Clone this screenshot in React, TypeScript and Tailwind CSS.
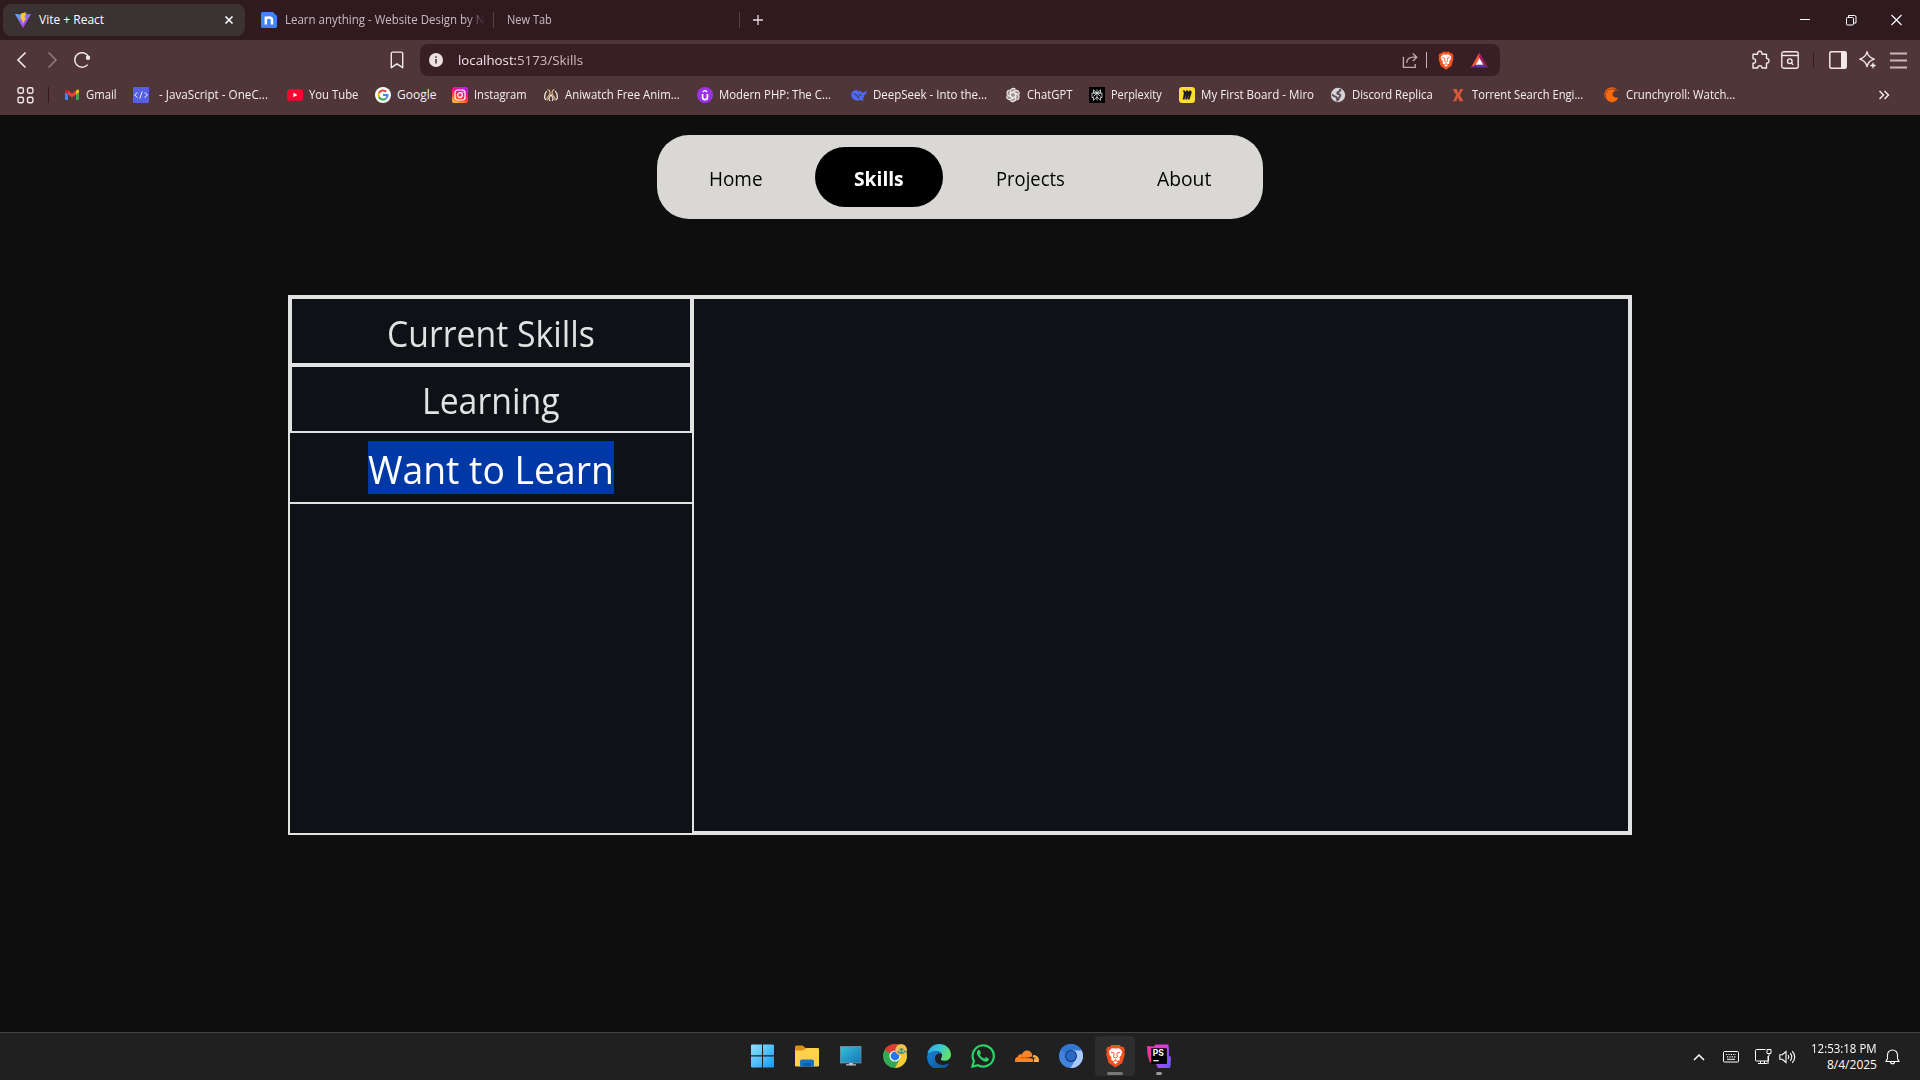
import { useLayoutEffect, useRef, useState } from "react";
import type { ReactNode } from "react";

const FONT = "font-['Segoe_UI','Open_Sans','Noto_Sans',sans-serif]";

/* A line of text condensed or widened to an exact advance width. */
function Fit({ children, w, className = "" }: { children: string; w: number; className?: string }) {
  const ref = useRef<HTMLSpanElement>(null);
  const [scale, setScale] = useState(1);
  useLayoutEffect(() => {
    const measure = () => {
      if (ref.current) setScale(w / ref.current.offsetWidth);
    };
    measure();
    document.fonts?.ready.then(measure);
  }, [w]);
  return (
    <span className={`inline-block shrink-0 whitespace-pre ${className}`} style={{ width: w }}>
      <span ref={ref} className="inline-block origin-left" style={{ transform: `scaleX(${scale})` }}>
        {children}
      </span>
    </span>
  );
}

function BraveLogo({ className }: { className: string }) {
  return (
    <svg viewBox="0 0 20 24" className={className}>
      <path d="M14 1l2 2 2-.2L19.4 6l-.6 2 .6 2-2.6 9-6.8 4.6L3.2 19 .6 10l.6-2-.6-2L2 2.8 4 3l2-2z" fill="#f4501f" />
      <path d="M10 4.600l2.600-.4 1.600.4 2.400 3-.8 3.600-1.900 2 .5 1.600-.6 1.700-2.200.4-1.600-1.600-1.600 1.600-2.200-.4-.6-1.700.5-1.600-1.900-2L3.400 7.600l2.400-3 1.600-.4zM7.600 18.200L10 16.800l2.400 1.400L10 20z" fill="#fff" />
      <path d="M5.200 8.200l3 .7.400 1.400-.6 2.600L10 14.200l2-1.300-.6-2.600.4-1.400 3-.7" fill="none" stroke="#f4501f" strokeWidth="1" />
    </svg>
  );
}

const ic = "size-4 shrink-0";

const bookmarks: { label: string; slot: number; w: number; icon: ReactNode; pad?: boolean }[] = [
  {
    label: "Gmail", slot: 69, w: 31,
    icon: (
      <svg viewBox="0 0 16 16" className={ic}>
        <path d="M1 4v8.500c0 .3.200.5.500.5H4V6.200z" fill="#4285f4" />
        <path d="M15 4v8.500c0 .3-.2.500-.5.500H12V6.200z" fill="#34a853" />
        <path d="M12 3.800V7.500L15 5.200V4c0-1.300-1.400-1.800-2.300-1z" fill="#fbbc04" />
        <path d="M4 3.600v3.800L8 10.500l4-3.100V3.600L8 6.700z" fill="#ea4335" />
        <path d="M1 4v1.200l3 2.200V3.600L3.300 3C2.400 2.200 1 2.700 1 4z" fill="#c5221f" />
      </svg>
    ),
  },
  {
    label: "- JavaScript - OneC...", slot: 154, w: 109, pad: true,
    icon: (
      <svg viewBox="0 0 16 16" className={ic}>
        <rect width="16" height="16" rx="1" fill="#5561e0" />
        <path d="M4.500 5.500L1.600 8l2.900 2.500M11.500 5.500L14.400 8l-2.900 2.500M9.200 4.500l-2.400 7" fill="none" stroke="#e8eaff" strokeWidth="1" />
      </svg>
    ),
  },
  {
    label: "You Tube", slot: 88, w: 49,
    icon: (
      <svg viewBox="0 0 16 16" className={ic}>
        <rect y="2.300" width="16" height="11.400" rx="2.800" fill="#ff0033" />
        <path d="M6.400 5.700v4.600l4-2.300z" fill="#fff" />
      </svg>
    ),
  },
  {
    label: "Google", slot: 77, w: 39,
    icon: (
      <svg viewBox="0 0 16 16" className={ic}>
        <circle cx="8" cy="8" r="8" fill="#fff" />
        <g fill="none" strokeWidth="2">
          <path d="M11.200 4.800A4.500 4.500 0 0 0 4 6" stroke="#ea4335" />
          <path d="M4.100 5.800a4.600 4.600 0 0 0 0 4.400" stroke="#fbbc05" />
          <path d="M4 10a4.500 4.500 0 0 0 7 1.400" stroke="#34a853" />
          <path d="M8 8h4.500c0 1.500-.5 2.600-1.500 3.400" stroke="#4285f4" />
        </g>
      </svg>
    ),
  },
  {
    label: "Instagram", slot: 91, w: 53,
    icon: (
      <svg viewBox="0 0 16 16" className={ic}>
        <defs>
          <linearGradient id="ig" x1=".2" y1="1" x2=".7" y2="0">
            <stop offset="0" stopColor="#ffc43a" />
            <stop offset=".35" stopColor="#ff4b2b" />
            <stop offset=".65" stopColor="#f0108c" />
            <stop offset="1" stopColor="#b824e8" />
          </linearGradient>
        </defs>
        <rect width="16" height="16" rx="2.500" fill="url(#ig)" />
        <rect x="3" y="3" width="10" height="10" rx="2.800" fill="none" stroke="#fff" strokeWidth="1.200" />
        <circle cx="8" cy="8" r="2.300" fill="none" stroke="#fff" strokeWidth="1.200" />
        <circle cx="10.900" cy="5.100" r=".7" fill="#fff" />
      </svg>
    ),
  },
  {
    label: "Aniwatch Free Anim...", slot: 154, w: 115,
    icon: (
      <svg viewBox="0 0 16 16" className={ic} fill="none" strokeWidth="1.200" strokeLinejoin="round">
        <path d="M3.800 4.200C2 6 1.500 8.500 1.600 11l1.200 2M12.200 4.200C14 6 14.500 8.500 14.400 11l-1.200 2" stroke="#f3e9dc" />
        <path d="M4.500 2.500C7 3.500 8 5.500 5.800 8.500L4 11v2.500M11.500 2.500C9 3.500 8 5.500 10.200 8.500L12 11v2.500" stroke="#d9bd8c" />
        <path d="M8 7.500L5.800 11.500l1 2.500M8 7.500l2.200 4-1 2.500" stroke="#f3e9dc" />
      </svg>
    ),
  },
  {
    label: "Modern PHP: The C...", slot: 154, w: 112,
    icon: (
      <svg viewBox="0 0 16 16" className={ic} fill="none" stroke="#fff">
        <circle cx="8" cy="8" r="8" fill="#9a33ee" stroke="none" />
        <path d="M5.600 7v3.200a2.400 2.400 0 0 0 4.800 0V7" strokeWidth="1.700" />
        <path d="M5.700 4.900L8 3.500l2.300 1.400" strokeWidth="1.300" />
      </svg>
    ),
  },
  {
    label: "DeepSeek - Into the...", slot: 154, w: 114,
    icon: (
      <svg viewBox="0 0 16 16" className={ic}>
        <path d="M.3 8C.3 4.800 2.500 3.200 4.800 3.200c1.300 0 2.400.6 3.300 1.500l1.300-1.500c.4 1.600 1.200 2.400 2.300 2.600 1.200-.2 2.200-1 4.100-2.300-.1 2.600-.9 3.800-2.500 4.300 0 1.900-.7 3.200-1.700 4.100l1.500 1.300c-1.500.5-2.900.2-3.700-.2C4.800 14.400.3 12.200.3 8z" fill="#4d6bfe" />
        <path d="M2.500 7c2.800.2 4.400 2.400 5.800 4.600M7.800 7.300c1.200 0 2 .7 2.300 1.900" stroke="#503539" strokeWidth="1.200" fill="none" />
      </svg>
    ),
  },
  {
    label: "ChatGPT", slot: 84, w: 45,
    icon: (
      <svg viewBox="0 0 24 24" className={ic}>
        <circle cx="12" cy="12" r="9.500" fill="#a39396" />
        <g fill="none" stroke="#efe9ea" strokeWidth="1.700">
          {[0, 60, 120, 180, 240, 300].map((a) => (
            <path key={a} transform={`rotate(${a} 12 12)`} d="M12 7.600l-4 2.300V6.300a4.300 4.300 0 0 1 7.700-2.600M12 7.600l5.700 3.300" />
          ))}
        </g>
      </svg>
    ),
  },
  {
    label: "Perplexity", slot: 90, w: 51,
    icon: (
      <svg viewBox="0 0 16 16" className={ic} fill="none" stroke="#dfe6e6" strokeWidth=".8">
        <rect width="16" height="16" fill="#000" stroke="none" />
        <path d="M8 2.500v11M4.500 2.800L8 6l3.500-3.200V6h-7zM3 6h10v4.500h-1.500v2.800L8 10l-3.500 3.300v-2.800H3zM8 6l-3.500 3.500M8 6l3.500 3.500" />
      </svg>
    ),
  },
  {
    label: "My First Board - Miro", slot: 151, w: 113,
    icon: (
      <svg viewBox="0 0 16 16" className={ic}>
        <rect width="16" height="16" rx="3" fill="#ffdd33" />
        <path d="M3.700 3.500h2l1 1.500.2-1.500h2l1 1.400.3-1.400h1.600l1 1.700-2.300 7.300H8.700l1.300-5-2 5H6.100l1.100-5.300-1.800 5.300H3.700l1.200-6.500z" fill="#1c1c1e" />
      </svg>
    ),
  },
  {
    label: "Discord Replica", slot: 120, w: 81,
    icon: (
      <svg viewBox="0 0 16 16" className={ic}>
        <circle cx="8" cy="8" r="7.200" fill="#d5d3d6" />
        <path d="M9.500 2c1.500 1 1.200 2-.3 2.500-1.300.5-2.400.6-2 1.800.3.800 2.600.6 3.100 1.900.4 1.400-1.200 1.600-1.500 3-.2 1-.6 1.900-1.400 2.300-.5-1.200-.3-2-.8-3.200C6 9.500 4 9.500 2 7.500" fill="none" stroke="#5d5058" strokeWidth="1.900" />
      </svg>
    ),
  },
  {
    label: "Torrent Search Engi...", slot: 154, w: 111,
    icon: (
      <svg viewBox="0 0 16 16" className={ic}>
        <path d="M2.800 2h4l1.500 4 2-4h2.900L10 8l3.200 6.200H9.500L7.900 10l-1.700 4.200H3L6.200 8z" fill="#d9583a" />
      </svg>
    ),
  },
  {
    label: "Crunchyroll: Watch...", slot: 154, w: 109,
    icon: (
      <svg viewBox="0 0 16 16" className={ic}>
        <path d="M2.200 14A7.800 7.800 0 0 1 .2 8C.3 3.700 3.700.3 7.800.3c3 0 5.700 1.800 6.900 4.500A6.900 6.900 0 0 0 2.200 14z" fill="#e8600c" />
        <path d="M11.800 3.700A6.400 6.400 0 1 0 14.200 10a3.500 3.500 0 1 1-2.400-6.300z" fill="#ff6a0d" />
      </svg>
    ),
  },
];

function TabStrip() {
  return (
    <div className="flex h-10 items-center bg-[#2f1a20] text-[12px] text-[#c9bcc0]">
      <div className="ml-[3px] flex h-8 w-[242px] items-center rounded-lg bg-[#3b3233] pr-[11px] pl-3 text-white">
        <svg viewBox="0 0 16 16" className="size-4 shrink-0">
          <defs>
            <linearGradient id="vt" x1="0" y1="0" x2=".6" y2="1">
              <stop offset="0" stopColor="#41c8ff" />
              <stop offset=".45" stopColor="#8b6cff" />
              <stop offset="1" stopColor="#bd34fe" />
            </linearGradient>
          </defs>
          <path d="M0 2l6 .6L16 2 8.400 15.600c-.2.300-.5.300-.7 0z" fill="url(#vt)" />
          <path d="M11.300.3L6 1.400l-.5 6.200 1.800-.4-.4 2.400 1.100-.4-.5 3.300 3.700-6.800-1.900.3z" fill="#ffc72b" />
        </svg>
        <Fit w={65} className="ml-2">Vite + React</Fit>
        <svg viewBox="0 0 10 10" className="ml-auto size-[10px]" stroke="#fff" strokeWidth="1.600">
          <path d="M1.500 1.500l7 7M8.500 1.500l-7 7" />
        </svg>
      </div>
      <svg viewBox="0 0 16 16" className="ml-4 size-4 shrink-0">
        <path d="M1.500 0H12l4 4v10.500c0 .8-.7 1.500-1.500 1.500h-13A1.500 1.500 0 0 1 0 14.500v-13C0 .7.700 0 1.500 0z" fill="#3f83f8" />
        <path d="M4.800 12.500v-8M4.800 8c0-3.300 6.200-3.300 6.200 0v4.500" fill="none" stroke="#fff" strokeWidth="2.500" />
      </svg>
      <div className="ml-2 w-[200px] [mask-image:linear-gradient(to_right,#000_182px,transparent_200px)]">
        <Fit w={199}>Learn anything - Website Design by N</Fit>
      </div>
      <div className="ml-[8px] h-4 w-px bg-[#554249]" />
      <Fit w={45} className="ml-[13px]">New Tab</Fit>
      <div className="ml-[187px] h-4 w-px bg-[#554249]" />
      <svg viewBox="0 0 10 10" className="ml-[13px] size-[10px]" stroke="#e6dcdf" strokeWidth="1.300">
        <path d="M5 0v10M0 5h10" />
      </svg>
      <svg viewBox="0 0 102 12" className="mr-[18px] ml-auto h-3 w-[102px]" fill="none" stroke="#fff">
        <path d="M0 5.500h10" />
        <rect x="46.500" y="3.500" width="7" height="7.500" rx="1" />
        <path d="M48.500 3V1.500h6a1.500 1.500 0 0 1 1.500 1.500v6h-2" />
        <path d="M91.500 1l10 10M101.500 1l-10 10" strokeWidth="1.100" />
      </svg>
    </div>
  );
}

function AddressRow() {
  return (
    <div className="flex h-10 items-center pl-4">
      <svg viewBox="0 0 12 18" className="h-[18px] w-3" fill="none" stroke="#f2e9eb" strokeWidth="1.600"><path d="M9.500 1.500L2 9l7.500 7.500" /></svg>
      <svg viewBox="0 0 12 18" className="ml-[18px] h-[18px] w-3" fill="none" stroke="#93797e" strokeWidth="1.600"><path d="M2.500 1.500L10 9l-7.500 7.500" /></svg>
      <svg viewBox="0 0 18 18" className="ml-[15px] size-[18px]" fill="none" stroke="#f2e9eb" strokeWidth="1.500">
        <path d="M14.700 13.600A7.300 7.300 0 1 1 15.700 6" />
        <circle cx="15" cy="6.800" r="2.200" fill="#f2e9eb" stroke="none" />
      </svg>
      <svg viewBox="0 0 14 18" className="ml-[299px] h-[18px] w-[14px]" fill="none" stroke="#f2e9eb" strokeWidth="1.400">
        <path d="M1.300 2.500c0-.8.500-1.400 1.300-1.400h8.800c.8 0 1.300.6 1.300 1.400v14.200L7 12.800l-5.700 3.900z" strokeLinejoin="round" />
      </svg>
      <div className="ml-4 flex h-8 w-[1080px] items-center rounded-lg bg-[#381e25] pl-[9px]">
        <svg viewBox="0 0 14 14" className="size-[14px]">
          <circle cx="7" cy="7" r="7" fill="#eedfe2" />
          <path d="M7 6v4.500M7 3.200v1.500" stroke="#381e25" strokeWidth="1.400" />
        </svg>
        <div className="ml-[15px] flex text-[13.500px]">
          <Fit w={59} className="text-[#f0e6e8]">localhost:</Fit>
          <Fit w={66} className="text-[#d0bcc1]">5173/Skills</Fit>
        </div>
        <svg viewBox="0 0 18 18" className="ml-auto size-[17px]" fill="none" stroke="#c0adb1" strokeWidth="1.400">
          <path d="M1.500 5v11.300H14v-3.500M5 11.500c.3-4.500 3-6 7-6h3.500M11.500 1.500l4.200 4-4.200 4" />
        </svg>
        <div className="ml-[7px] h-4 w-px bg-[#c4b1b5]" />
        <BraveLogo className="ml-[11px] h-[19px] w-4" />
        <svg viewBox="0 0 18 16" className="mr-[12px] ml-[17px] h-[16px] w-[17px]">
          <path d="M9 0v6L5 13l-5 3z" fill="#ff5a3c" />
          <path d="M9 0v6l4 7 5 3z" fill="#9e1f63" />
          <path d="M0 16l5-3h8l5 3z" fill="#5a30a8" />
          <path d="M9 6l4 7H5z" fill="#fff" />
        </svg>
      </div>
      <svg viewBox="0 0 18 20" className="ml-[252px] h-5 w-[18px]" fill="none" stroke="#f2e9eb" strokeWidth="1.400">
        <path d="M1 4.200h4.600C5 .2 10.500.2 10 4.200h4.500v4.300c3.300-.5 3.300 5 0 4.600V18H10c.4-3-4.600-3-4.300 0H1v-4.800c3.500.5 3.500-5 0-4.500z" strokeLinejoin="round" />
      </svg>
      <svg viewBox="0 0 18 18" className="ml-[11px] size-[18px]" fill="none" stroke="#f2e9eb" strokeWidth="1.400">
        <rect x=".8" y=".800" width="16.400" height="16.400" rx="2" />
        <path d="M1 4.500h16" />
        <circle cx="8.800" cy="10.200" r="2.300" />
        <path d="M10.400 11.900l1.800 2" />
      </svg>
      <div className="ml-[14px] h-4 w-px bg-[#35191f]" />
      <svg viewBox="0 0 18 18" className="ml-[15px] size-[18px]" fill="none" stroke="#f2e9eb" strokeWidth="1.500">
        <rect x=".8" y=".8" width="16.400" height="16.400" rx="1.500" />
        <path d="M12 1h5v16h-5z" fill="#f2e9eb" stroke="none" />
      </svg>
      <svg viewBox="0 0 18 18" className="ml-[12px] size-[18px]" fill="none" stroke="#f2e9eb" strokeWidth="1.400" strokeLinejoin="round">
        <path d="M8 .8c1 4 2.500 5.600 7.200 7.400-2.800 1-4 1.700-5 2.800-1 1.200-1.500 2.300-2.200 4.500C7 11.500 5.500 9.900.8 8.200 5.500 6.400 7 4.800 8 .8z" />
        <path d="M14 11.500c.5 2 1 2.500 3 3-2 .5-2.500 1-3 3-.5-2-1-2.500-3-3 2-.5 2.500-1 3-3z" fill="#f2e9eb" strokeWidth=".4" />
      </svg>
      <svg viewBox="0 0 17 17" className="ml-[13px] size-[17px]" stroke="#c9b9bc" strokeWidth="1.800"><path d="M0 1.500h17M0 8.500h17M0 15.500h17" /></svg>
    </div>
  );
}

function BookmarkBar() {
  return (
    <div className="flex h-[35px] items-center pb-[5px] text-[12px] text-[#f7f0f1]">
      <svg viewBox="0 0 17 17" className="ml-[17px] size-[17px] shrink-0" fill="none" stroke="#f2e9eb" strokeWidth="1.400">
        <rect x="1" y=".8" width="5.400" height="5.400" rx="1.400" />
        <rect x="10.500" y=".8" width="5.400" height="5.400" rx="1.400" />
        <rect x="1" y="10.300" width="5.400" height="5.400" rx="1.400" />
        <rect x="10.500" y="10.300" width="5.400" height="5.400" rx="1.400" />
      </svg>
      <div className="mr-[15px] ml-[14px] h-4 w-px bg-[#35191f]" />
      {bookmarks.map((b) => (
        <div key={b.label} className="flex shrink-0 items-center" style={{ width: b.slot }}>
          {b.icon}
          <Fit w={b.w} className={b.pad ? "ml-[10px]" : "ml-[6px]"}>{b.label}</Fit>
        </div>
      ))}
      <svg viewBox="0 0 12 10" className="mr-[30px] ml-auto h-[10px] w-3" fill="none" stroke="#f2e9eb" strokeWidth="1.500">
        <path d="M1.500 1l4 4-4 4M6.500 1l4 4-4 4" />
      </svg>
    </div>
  );
}

function Skills() {
  return (
    <main className="flex grow flex-col items-center pt-5">
      <nav className="flex h-[84px] w-[606px] shrink-0 items-center justify-between rounded-[32px] bg-[#d9d8d4] px-3 text-[20px] text-black">
        <div className="px-10 pt-[3px]"><Fit w={54}>Home</Fit></div>
        <div className="flex h-[60px] items-center rounded-[30px] bg-black px-[39px] pt-[3px] font-bold text-white"><Fit w={50}>Skills</Fit></div>
        <div className="px-10 pt-[3px]"><Fit w={69}>Projects</Fit></div>
        <div className="px-10 pt-[3px]"><Fit w={54}>About</Fit></div>
      </nav>
      <section className="mt-[76px] flex h-[540px] w-[1344px] shrink-0 border-2 border-[#e2e2e2] bg-[#0e1216] text-[#e2e2e2]">
        <div className="flex w-[402px] flex-col items-center text-[36px]">
          <div className="flex h-[68px] w-full items-center justify-center border-2 border-[#e2e2e2] pt-[5px]"><Fit w={208}>Current Skills</Fit></div>
          <div className="flex h-[67.500px] w-full items-center justify-center border-2 border-[#e2e2e2] pt-[5px]"><Fit w={138}>Learning</Fit></div>
          <div className="flex h-[71.500px] w-full items-center justify-center border-b-2 border-[#e2e2e2] text-[39px] text-white">
            <span className="flex h-[53px] items-center bg-[#0038a6] pt-[4px]"><Fit w={246}>Want to Learn</Fit></span>
          </div>
        </div>
        <div className="grow border-2 border-[#e2e2e2]" />
      </section>
    </main>
  );
}

const t = "size-6";

const taskIcons: ReactNode[] = [
  <svg viewBox="0 0 24 24" className={t}>
    <defs><linearGradient id="w" x1="0" y1="0" x2="1" y2="1"><stop offset="0" stopColor="#8fe4ff" /><stop offset="1" stopColor="#1698f5" /></linearGradient></defs>
    <path d="M0 1.500A1 1 0 0 1 1 .5h10v10.800H0zM12 .5h10a1 1 0 0 1 1 1v9.800H12zM0 12.500h11v11H1a1 1 0 0 1-1-1zM12 12.500h11v10a1 1 0 0 1-1 1H12z" fill="url(#w)" />
  </svg>,
  <svg viewBox="0 0 24 24" className={t}>
    <path d="M0 3a1.500 1.500 0 0 1 1.500-1.500h6L10.500 4v4H0z" fill="#d9930c" />
    <path d="M0 6.500h8L11 4h12a1 1 0 0 1 1 1v16.500a1 1 0 0 1-1 1H1a1 1 0 0 1-1-1z" fill="#ffd04a" />
    <path d="M5 22.500v-5a2 2 0 0 1 2-2h10a2 2 0 0 1 2 2v5z" fill="#1572c4" />
    <path d="M8 19h8v3.500H8z" fill="#0c5ca8" />
  </svg>,
  <svg viewBox="0 0 24 24" className={t}>
    <defs><linearGradient id="m" x1="0" y1="0" x2="1" y2="1"><stop offset="0" stopColor="#37c0d8" /><stop offset="1" stopColor="#1476b8" /></linearGradient></defs>
    <rect x="1.500" y="2.500" width="20.500" height="16.500" fill="url(#m)" stroke="#7f9aa6" strokeWidth=".7" />
    <path d="M10 19h4v1.200h3v1.300H7v-1.300h3z" fill="#b9c4ca" />
  </svg>,
  <svg viewBox="0 0 24 24" className={t}>
    <circle cx="12" cy="12" r="12" fill="#34a853" />
    <path d="M12 12L1.600 6A12 12 0 0 1 22.400 6z" fill="#e03b2f" />
    <path d="M12 7h10.800A12 12 0 0 1 12 24l5-9z" fill="#fcc934" />
    <circle cx="12" cy="12" r="5.600" fill="#fff" />
    <circle cx="12" cy="12" r="4.400" fill="#2a73e8" />
    <circle cx="18.200" cy="5.800" r="5.800" fill="#f2c24a" />
    <path d="M18.500 4v6M15 7c1 3 6 3 7.500-.5M16.500 5.500h4" stroke="#32919c" strokeWidth="1.400" fill="none" />
  </svg>,
  <svg viewBox="0 0 24 24" className={t}>
    <defs>
      <linearGradient id="e1" x1="0" y1="0" x2="1" y2=".4"><stop offset="0" stopColor="#2b9fe8" /><stop offset=".5" stopColor="#34c6dc" /><stop offset="1" stopColor="#62e070" /></linearGradient>
      <linearGradient id="e2" x1="0" y1="0" x2="1" y2="1"><stop offset="0" stopColor="#1683d0" /><stop offset="1" stopColor="#0e4fa0" /></linearGradient>
    </defs>
    <path d="M.3 10C1.500 4 6.500 0 12 0c7 0 12 5 12 10.500 0 4-3 6.300-6.500 6.300-3 0-4.300-1-3.300-2.500 2.800-4.300-1-7-4.700-7C5 7.300 1.500 10 .3 10z" fill="url(#e1)" />
    <path d="M.2 11.500C1.500 8.500 5 7 8.800 7c3.200 0 5.300 1.500 6 3-4-1.500-6.800 1-6.800 4.500 0 5 5.500 8.300 12.800 5.300.8-.3 1.200.2.800.8A12 12 0 0 1 .2 11.500z" fill="url(#e2)" />
  </svg>,
  <svg viewBox="0 0 24 24" className={t}>
    <path d="M1.400 22.600l1.500-5.600A10.600 10.600 0 1 1 7 21.200z" fill="none" stroke="#2bd366" strokeWidth="2.200" />
    <path d="M8.700 6.300c-.5-.8-1-.7-1.500-.3C4.800 8.300 6 11.300 8.800 14.200c3.200 3.300 6.200 4.600 8.300 2.600 1-1 1-1.700.8-2.100l-2.600-1.400c-.5-.2-.8 0-1.800 1.400-2-.6-3.600-2-4.700-4.200 1.300-1.300 1.200-1.500 1-2z" fill="#2bd366" />
  </svg>,
  <svg viewBox="0 0 24 24" className={t}>
    <path d="M17.800 18c.8-3 0-3.500-1.500-3.700L4.700 14c3-.5 11 .2 12.500-2 .5-2.700-2-5.500-5-5.500-3 0-4.800 1.800-5.500 4-2-1-3.700.2-3.700 2.300C1 13 0 14.500 0 16.200c0 .8 0 1.800.6 1.800z" fill="#f5842a" />
    <path d="M18.500 11c3 0 5.500 2.300 5.500 5 0 .8 0 2-.4 2h-5l.6-3.500 2-.5c-1.500-.3-3.200-.2-3.700-1z" fill="#fbb04a" />
  </svg>,
  <svg viewBox="0 0 24 24" className={t}>
    <circle cx="12" cy="12" r="12" fill="#4283df" />
    <path d="M12 12L1.600 6A12 12 0 0 1 22.400 6z" fill="#3377d3" />
    <path d="M12 6.500h10.700A12 12 0 0 1 11.500 24l5.500-9z" fill="#a9c9fb" />
    <circle cx="12" cy="12" r="6" fill="#10356f" />
    <circle cx="12" cy="12" r="5" fill="#2a68c5" />
  </svg>,
  <BraveLogo className="h-6 w-[21px]" />,
  <svg viewBox="0 0 24 24" className={t}>
    <defs>
      <linearGradient id="p1" x1="0" y1="1" x2="1" y2="0"><stop offset="0" stopColor="#ff2f6e" /><stop offset="1" stopColor="#d63cf0" /></linearGradient>
      <linearGradient id="p2" x1="0" y1="1" x2="1" y2="0"><stop offset="0" stopColor="#b74af7" /><stop offset=".5" stopColor="#6b57ff" /><stop offset="1" stopColor="#a04df8" /></linearGradient>
    </defs>
    <path d="M0 2l7 .500L8.500.500h13L22 10l-10 9-9.500-1L.5 10z" fill="url(#p1)" />
    <path d="M20 4.500l2 .5-.5 6L24 13l-.5 9.500-1 1.500H11l-2-4h11z" fill="url(#p2)" />
    <rect x="4.200" y="4.200" width="15.600" height="15.600" fill="#000" />
    <text x="5.800" y="12.300" fontSize="8.500" fontWeight="700" fill="#fff" fontFamily="Inter, sans-serif">PS</text>
    <path d="M6.300 16.700h5.500" stroke="#fff" strokeWidth="1.200" />
  </svg>,
];

function Taskbar() {
  return (
    <footer className="grid h-12 shrink-0 grid-cols-[741px_440px_1fr] border-t border-[#444] bg-[#202020]">
      <div />
      <div className="flex">
        {taskIcons.map((icon, i) => (
          <div key={i} className="flex w-11 flex-col items-center pt-[3px]">
            <div className={`flex h-10 w-10 flex-col items-center rounded ${i === 8 ? "bg-[#2d2d2d]" : ""}`}>
              <div className="flex h-[40px] items-center">{icon}</div>
              {i >= 8 && <div className={`-mt-1 h-[3px] shrink-0 rounded-full ${i === 8 ? "w-4 bg-[#777]" : "w-[6px] bg-[#999]"}`} />}
            </div>
          </div>
        ))}
      </div>
      <div className="flex items-center justify-end pr-5 text-white">
        <svg viewBox="0 0 12 8" className="h-2 w-3" fill="none" stroke="#fff" strokeWidth="1.500"><path d="M1 7l5-5 5 5" /></svg>
        <svg viewBox="0 0 16 12" className="ml-[18px] h-3 w-4" fill="none" stroke="#fff">
          <rect x=".5" y=".5" width="15" height="10.500" rx="1" />
          <path d="M3 3.500h10M4 5.800h9" strokeDasharray="1.200 1.200" strokeWidth="1.200" />
          <path d="M4 8.300h8" />
        </svg>
        <svg viewBox="0 0 17 17" className="ml-4 size-[17px]" fill="none" stroke="#fff">
          <path d="M10.500 1.500H1.500a1 1 0 0 0-1 1v9.500a1 1 0 0 0 1 1h12V8M5.500 13v2.500M9.500 13v2.500M3 15.500h9" />
          <path d="M12 1.500h4v4h-4zM14 5.500v2.500M13 16V8" />
        </svg>
        <svg viewBox="0 0 17 14" className="ml-[7px] h-[14px] w-[17px]" fill="none" stroke="#fff" strokeWidth="1.100">
          <path d="M.8 4.700h2.500L7 1.500v11L3.300 9.300H.8zM9 5c1 1.300 1 2.700 0 4M11.200 3.200c2 2.400 2 5.200 0 7.600M13.300 1.200c3 3.600 3 8 0 11.600" />
        </svg>
        <div className="ml-[15px] flex flex-col items-end text-[12px] leading-4">
          <Fit w={66}>12:53:18 PM</Fit>
          <Fit w={50}>8/4/2025</Fit>
        </div>
        <svg viewBox="0 0 15 16" className="ml-[8px] h-4 w-[15px]" fill="none" stroke="#fff" strokeWidth="1.100">
          <path d="M1 12.500l1.500-3V6a5 5 0 0 1 10 0v3.500l1.500 3zM5.500 12.800a2 2 0 0 0 4 0" />
        </svg>
      </div>
    </footer>
  );
}

export default function App() {
  return (
    <div className={`flex h-[1080px] w-[1920px] flex-col overflow-hidden bg-[#0e0e0e] ${FONT}`}>
      <header className="shrink-0 bg-[#503539]">
        <TabStrip />
        <AddressRow />
        <BookmarkBar />
      </header>
      <Skills />
      <Taskbar />
    </div>
  );
}
